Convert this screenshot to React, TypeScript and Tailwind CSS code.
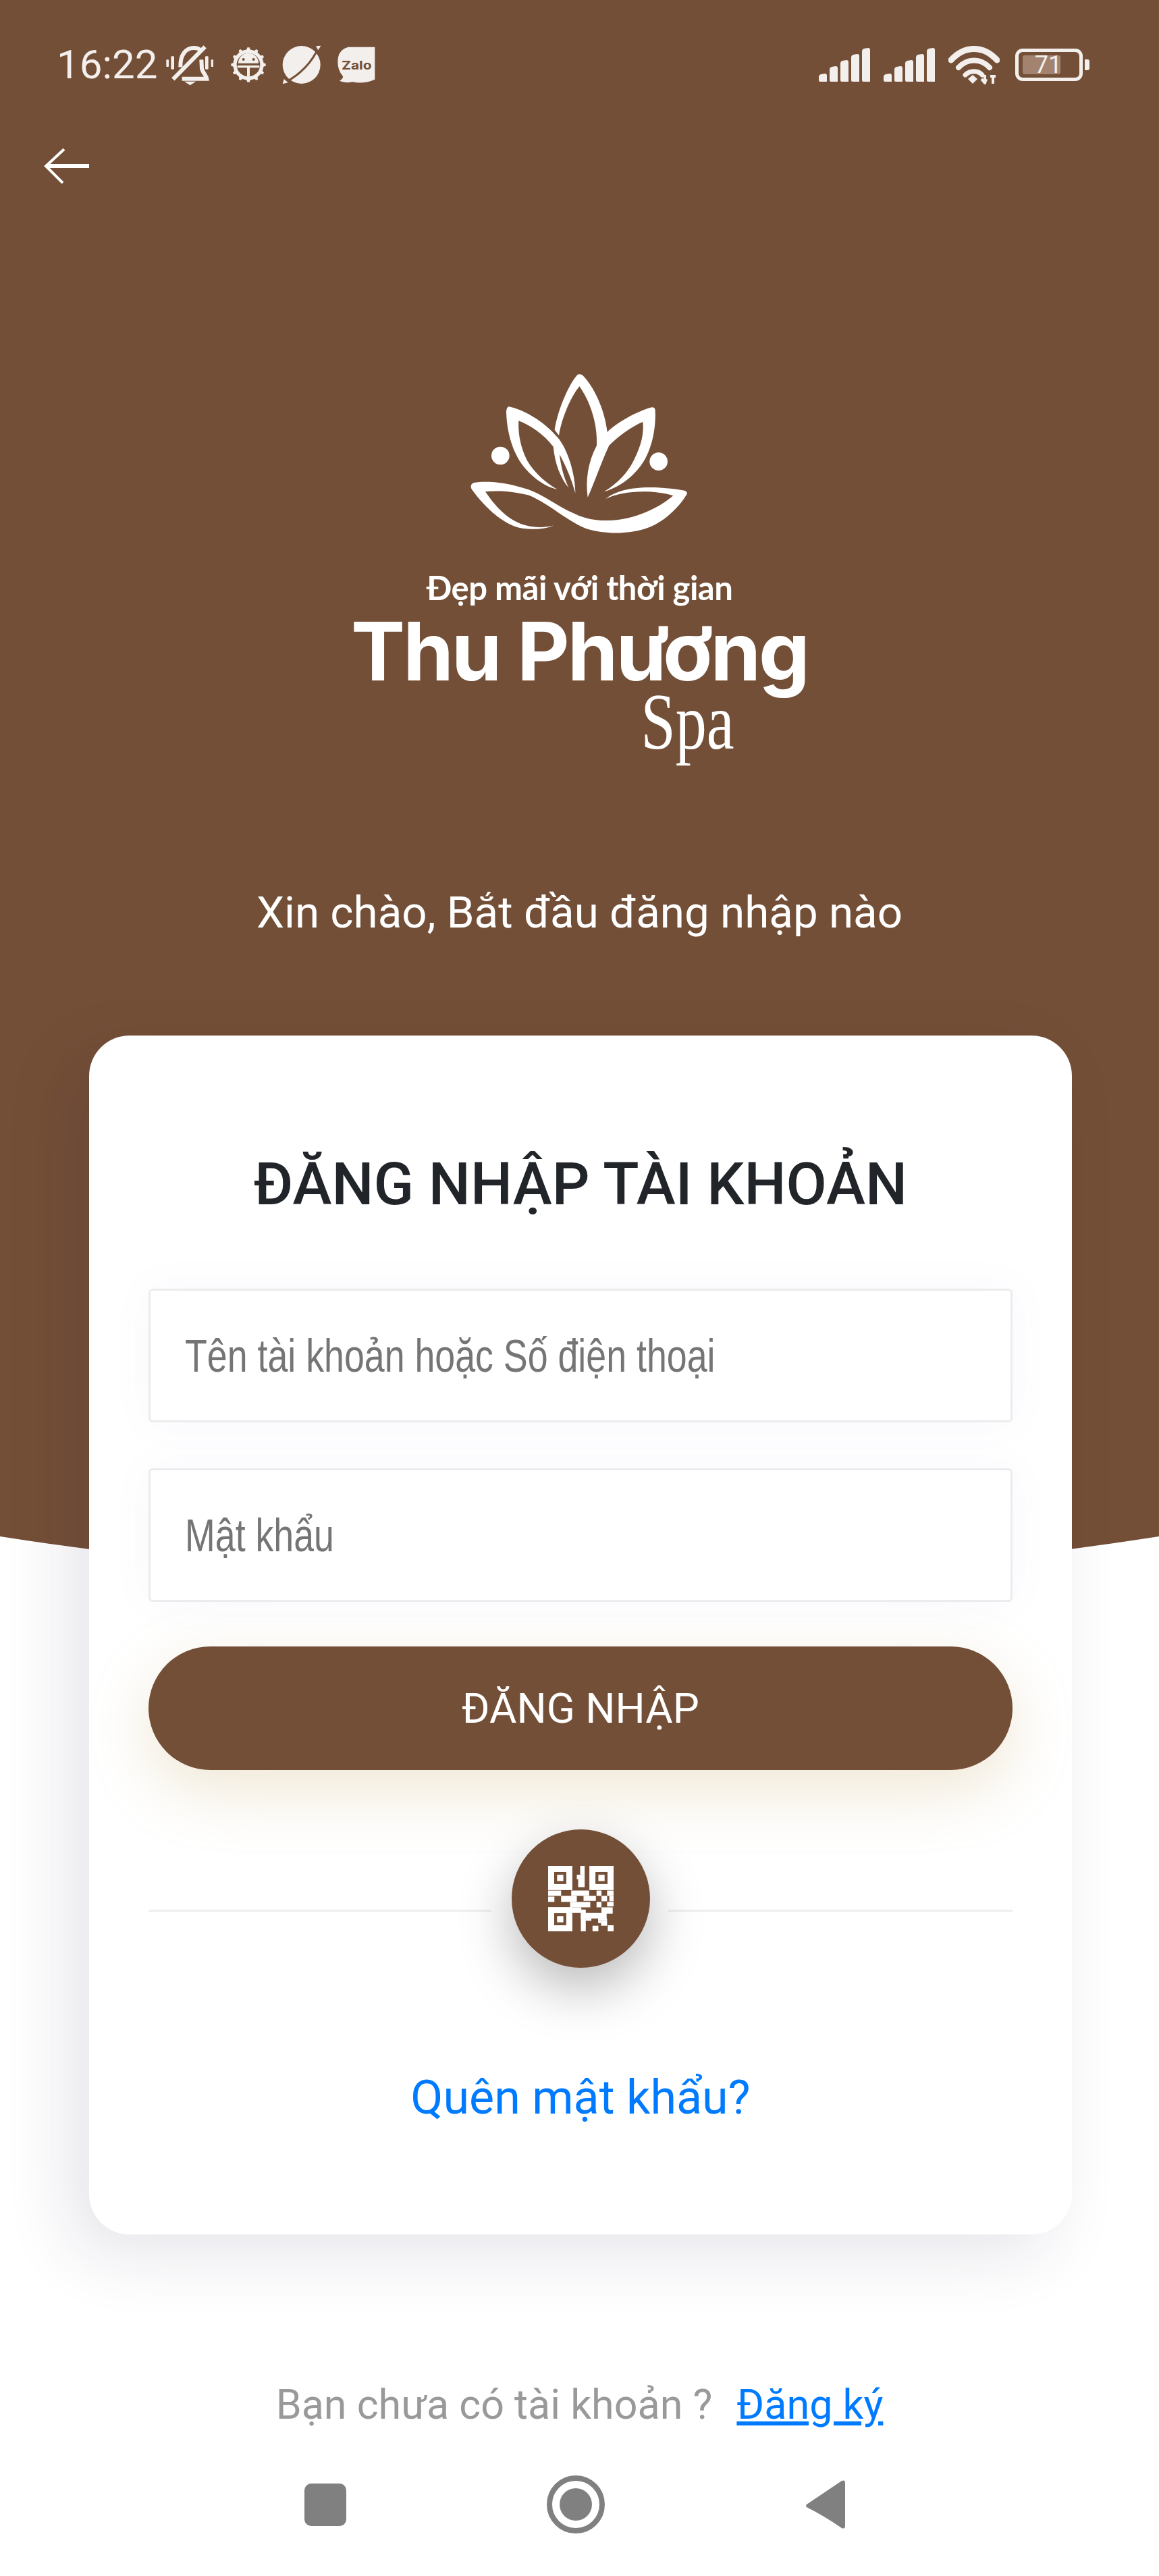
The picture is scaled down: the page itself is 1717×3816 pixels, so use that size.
import React from "react";

const BROWN = "#744f37";
const ICON = "#f3efec";
const R = "[font-family:Roboto,'Noto_Sans',sans-serif]";

function Flower() {
  return (
    <svg width="340" height="250" viewBox="0 0 1020 750" fill="#ffffff">
      <path d="M398 275 C415 170 470 60 500 30 Q510 24 522 32 C570 80 620 180 632 285 C680 240 760 195 830 175 Q845 175 845 190 C850 290 820 400 760 460 C720 505 670 535 618 550 C680 510 720 470 750 410 C785 340 795 290 790 240 C740 260 680 305 640 345 C605 420 575 510 545 575 C535 500 545 420 585 345 C590 240 550 140 508 82 C470 130 430 220 417 300 Z" />
      <path d="M195 172 C260 185 350 235 412 310 C455 360 490 470 490 557 C475 500 450 440 420 385 C425 435 440 490 460 532 C425 490 400 430 392 350 C350 295 290 255 238 235 C235 290 245 350 275 410 C310 470 360 510 410 540 C360 530 310 495 270 450 C215 390 185 290 183 195 Q185 172 195 172 Z" />
      <circle cx="157" cy="390" r="40" />
      <circle cx="860" cy="416" r="40" />
      <path d="M40 510 C100 500 190 510 280 540 C350 565 420 620 480 645 C530 670 580 680 640 678 C730 675 840 640 925 568 C830 540 700 545 625 582 C680 535 800 515 975 545 Q992 552 984 564 C950 620 880 690 800 715 C720 740 620 740 540 715 C450 680 370 600 280 565 C210 548 150 545 90 550 C130 610 190 680 270 700 C310 710 350 712 395 700 C350 720 290 720 240 710 C160 690 80 610 30 540 Q18 518 40 510 Z" />
    </svg>
  );
}

function BellOff() {
  return (
    <svg width="72" height="62" viewBox="35 15 216 186" fill="none" stroke={ICON} strokeWidth="18">
      <path d="M105 118 C103 62 130 33 165 33 C180 33 190 38 197 46" />
      <path d="M214 28 L72 172" strokeWidth="18" />
      <path d="M198 85 L200 125 C205 145 220 155 222 170 H112" />
      <path d="M122 182 H174 L148 199 Z" fill={ICON} stroke="none" />
      <g fill={ICON} stroke="none">
        <rect x="42" y="85" width="11" height="32" rx="3" />
        <rect x="63" y="70" width="14" height="58" rx="4" />
        <rect x="215" y="70" width="14" height="58" rx="4" />
        <rect x="241" y="85" width="11" height="32" rx="3" />
      </g>
    </svg>
  );
}

function GearBot() {
  const teeth = Array.from({ length: 12 }, (_, i) => i * 30);
  return (
    <svg width="56" height="54" viewBox="330 20 166 162">
      <g fill={ICON}>
        {teeth.map((a) => (
          <path key={a} d="M403 40 L408 24 H418 L423 40 Z" transform={`rotate(${a} 413 101)`} />
        ))}
        <circle cx="413" cy="101" r="68" />
      </g>
      <circle cx="413" cy="101" r="52" fill={BROWN} />
      <path d="M368 94 A45 45 0 0 1 458 94 Z" fill={ICON} />
      <circle cx="391" cy="77" r="6" fill={BROWN} />
      <circle cx="436" cy="77" r="6" fill={BROWN} />
      <rect x="364" y="104" width="98" height="10" fill={ICON} />
      <rect x="407" y="104" width="12" height="50" fill={ICON} />
    </svg>
  );
}

function Planet() {
  return (
    <svg width="58" height="58" viewBox="0 0 174 174">
      <circle cx="86" cy="87" r="84" fill={ICON} />
      <path d="M12 166 C80 130 130 80 162 10" fill="none" stroke={BROWN} strokeWidth="9" />
      <path d="M150 4 L172 2 L160 22 Z M8 150 L2 172 L26 166 Z" fill={ICON} />
    </svg>
  );
}

function Zalo() {
  return (
    <svg width="56" height="55" viewBox="815 18 166 165">
      <path d="M862 20 H980 V164 Q930 186 880 175 Q850 182 823 170 Q840 160 838 150 Q815 125 815 85 Q815 32 862 20 Z" fill={ICON} />
      <text x="832" y="119" fontSize="54" fontWeight="700" fill={BROWN} textLength="134" lengthAdjust="spacingAndGlyphs" fontFamily="Inter, sans-serif">Zalo</text>
    </svg>
  );
}

function Signal() {
  const bars = [
    [0, 38, 12],
    [16, 27, 23],
    [32, 18, 32],
    [48, 9, 41],
    [64, 0, 50],
  ];
  return (
    <svg width="77" height="50" viewBox="0 0 77 50" fill={ICON}>
      {bars.map(([x, y, h]) => (
        <path key={x} d={`M${x} ${y + 5} Q${x} ${y + 2} ${x + 3} ${y + 1} L${x + 9} ${y} Q${x + 12} ${y} ${x + 12} ${y + 3} V${y + h} Q${x + 12} 50 ${x + 9} 50 H${x + 2} Q${x} 50 ${x} ${y + h - 2} Z`} />
      ))}
    </svg>
  );
}

function Wifi() {
  return (
    <svg width="76" height="58" viewBox="0 0 76 58" fill="none" stroke={ICON} strokeLinecap="round">
      <path d="M4 22 C24 0 52 0 72 22" strokeWidth="9" />
      <path d="M15 33 C28 19 48 19 61 33" strokeWidth="8" />
      <path d="M25 44 C32 37 44 37 50 44" strokeWidth="7" />
      <path d="M29 50 L36 44 L43 50 L36 57 Z" fill={ICON} stroke="none" />
      <path d="M54 44 V53 M49 50 L54 56 L56 50 M66 57 V46 M62 46 H70" strokeWidth="4" strokeLinecap="butt" />
    </svg>
  );
}

function Arrow() {
  return (
    <svg width="68" height="52" viewBox="0 0 68 52" fill="none" stroke="#ffffff" strokeLinejoin="miter">
      <path d="M30 1 L3 26 L28 51" strokeWidth="4" />
      <path d="M3 26 H67" strokeWidth="6" />
    </svg>
  );
}

function QrIcon() {
  const r: [number, number, number, number][] = [
    [775, 495, 20, 40], [760, 535, 35, 20], [766, 555, 29, 35],
    [632, 605, 58, 24], [735, 605, 80, 24], [848, 605, 22, 24], [895, 605, 29, 24],
    [632, 632, 28, 24], [690, 629, 70, 27], [790, 629, 55, 22], [870, 629, 25, 24], [905, 629, 19, 24],
    [730, 656, 90, 24], [848, 656, 22, 24], [895, 656, 29, 20],
    [735, 680, 45, 25], [870, 680, 50, 28], [778, 690, 22, 97], [778, 705, 115, 25], [800, 730, 25, 10],
    [855, 730, 40, 10], [830, 762, 26, 25], [898, 760, 26, 27], [868, 740, 27, 22], [855, 740, 13, 10],
  ];
  return (
    <svg width="97" height="97" viewBox="632 495 292 292">
      <g fill="#ffffff">
        {[[632, 495], [816, 495], [632, 679]].map(([x, y]) => (
          <g key={x + "-" + y}>
            <rect x={x} y={y} width="108" height="108" />
            <rect x={x + 27} y={y + 27} width="54" height="54" fill={BROWN} />
            <rect x={x + 40} y={y + 40} width="28" height="28" />
          </g>
        ))}
        {r.map(([x, y, w, h]) => (
          <rect key={`${x}-${y}`} x={x} y={y} width={w} height={h} />
        ))}
      </g>
    </svg>
  );
}

function Field({ text, className }: { text: string; className: string }) {
  return (
    <div className={`flex h-[198px] w-full items-center rounded-[6px] border-[3px] border-[#ececef] bg-white pl-[51px] shadow-[0_0_60px_rgba(120,120,220,0.05)] ${className}`}>
      <span className="inline-block origin-left scale-x-[0.79] whitespace-nowrap text-[68px] leading-none text-[#757575] [font-family:'Liberation_Sans',sans-serif]">
        {text}
      </span>
    </div>
  );
}

export default function App() {
  return (
    <div className={`relative w-[1717px] h-[3816px] overflow-hidden bg-white ${R}`}>
      <svg className="absolute left-0 top-0" width="1717" height="2420" viewBox="0 0 1717 2420">
        <path d="M0 0 H1717 V2276 Q858 2410 0 2276 Z" fill={BROWN} />
      </svg>

      <div className="relative flex flex-col items-center">
        {/* status bar */}
        <div className="mt-[66px] flex h-[60px] w-full items-center justify-between pl-[84px] pr-[103px]">
          <div className="flex items-center">
            <span className="mr-[11px] text-[60px] leading-none text-[#f3efec]">16:22</span>
            <BellOff />
            <span className="w-[24px]" />
            <GearBot />
            <span className="w-[22px]" />
            <Planet />
            <span className="w-[24px]" />
            <Zalo />
          </div>
          <div className="flex items-center">
            <Signal />
            <span className="w-[19px]" />
            <Signal />
            <span className="w-[19px]" />
            <Wifi />
            <span className="w-[23px]" />
            <div className="relative flex h-[48px] w-[100px] items-center justify-center rounded-[11px] border-[5px] border-[#f3efec]">
              <div className="absolute left-[6px] top-[5px] h-[28px] w-[56px] rounded-[3px] bg-[#a3836f]" />
              <span className="relative mr-[2px] text-[36px] leading-none text-[#f3efec]">71</span>
            </div>
            <div className="ml-[3px] h-[16px] w-[7px] rounded-r-[3px] bg-[#f3efec]" />
          </div>
        </div>

        {/* back */}
        <div className="mt-[94px] flex h-[52px] w-full pl-[65px]">
          <Arrow />
        </div>

        {/* logo */}
        <div className="mt-[273px]">
          <Flower />
        </div>
        <div className="mt-[50px] h-[50px] text-[49px] leading-[50px] font-bold tracking-[-0.5px] text-white [font-family:Lato,sans-serif]">
          Đẹp mãi với thời gian
        </div>
        <div className="mt-[18px] h-[104px] text-[120px] leading-[104px] font-bold tracking-[-3px] text-white [font-family:Inter,sans-serif]">
          Thu Phương
        </div>
        <div className="mt-[13px] ml-[320px] h-[80px] scale-x-[0.78] text-[118px] leading-[80px] text-white [font-family:'Liberation_Serif',serif]">
          Spa
        </div>

        {/* greeting */}
        <div className="mt-[197px] h-[90px] text-[65.5px] leading-[90px] text-white">
          Xin chào, Bắt đầu đăng nhập nào
        </div>

        {/* card */}
        <div className="mt-[137px] ml-[3px] flex h-[1776px] w-[1456px] flex-col rounded-[60px] bg-white px-[88px] shadow-[-30px_30px_100px_rgba(30,30,70,0.11)]">
          <h1 className="mt-[165px] h-[110px] text-center text-[87.5px] leading-[110px] font-medium text-[#212529]">
            ĐĂNG NHẬP TÀI KHOẢN
          </h1>
          <Field text="Tên tài khoản hoặc Số điện thoại" className="mt-[100px]" />
          <Field text="Mật khẩu" className="mt-[68px]" />
          <button className="mt-[66px] h-[183px] w-full rounded-full bg-[#744f37] text-[62px] text-white shadow-[0_30px_90px_rgba(200,165,100,0.27)]">
            ĐĂNG NHẬP
          </button>
          <div className="relative mt-[88px] flex h-[205px] w-full items-center justify-center">
            <div className="absolute left-0 right-0 top-[119px] flex justify-between">
              <div className="h-[3px] w-[508px] bg-[#efefef]" />
              <div className="h-[3px] w-[510px] bg-[#efefef]" />
            </div>
            <div className="relative flex h-[205px] w-[205px] items-center justify-center rounded-full bg-[#744f37] shadow-[0_30px_80px_rgba(0,0,0,0.28)]">
              <QrIcon />
            </div>
          </div>
          <div className="mt-[142px] h-[100px] text-center text-[70px] leading-[100px] text-[#007bff]">
            Quên mật khẩu?
          </div>
        </div>

        {/* footer */}
        <div className="mt-[212px] flex h-[80px] items-center text-[61px] leading-[80px]">
          <span className="text-[#999999]">Bạn chưa có tài khoản ?</span>
          <span className="ml-[36px] text-[#007bff] underline">Đăng ký</span>
        </div>

        {/* nav */}
        <div className="mt-[65px] flex h-[86px] w-full items-center pl-[451px]">
          <div className="h-[63px] w-[62px] rounded-[10px] bg-[#808080]" />
          <div className="ml-[297px] flex h-[86px] w-[86px] items-center justify-center rounded-full border-[8px] border-[#808080]">
            <div className="h-[48px] w-[48px] rounded-full bg-[#808080]" />
          </div>
          <svg className="ml-[297px]" width="60" height="74" viewBox="0 0 60 74">
            <path d="M2 37 L54 2 Q59 0 59 5 V69 Q59 74 54 72 Q28 54 2 41 Q0 39 2 37 Z" fill="#808080" />
          </svg>
        </div>
      </div>
    </div>
  );
}
